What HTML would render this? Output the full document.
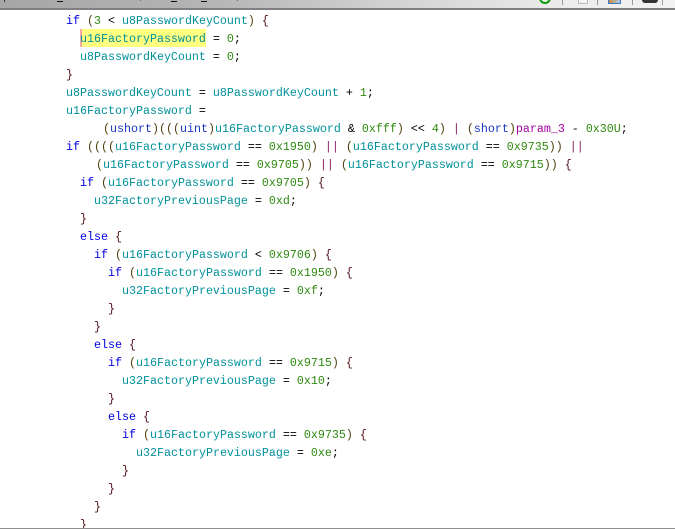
<!DOCTYPE html>
<html>
<head>
<meta charset="utf-8">
<style>
html,body{margin:0;padding:0;background:#fff;width:675px;height:531px;overflow:hidden}
#c{position:relative;width:675px;height:531px;overflow:hidden;background:#fff}
.l{position:absolute;white-space:pre;font-family:"Liberation Mono",monospace;font-size:11.67px;line-height:18px;height:18px;color:#000;margin-top:1px}
.k{color:#0000e6}.v{color:#00919a}.n{color:#2e8b10}.b{color:#501018}.o{color:#000}.t{color:#1a35c0}.p{color:#a000a0}.r{color:#8a2060}.a{color:#504010}
.abs{position:absolute}
</style>
</head>
<body>
<div id="c">
<div class="abs" style="left:0;top:0;width:675px;height:8px;background:linear-gradient(90deg,#a6a6a6 0%,#b4b4b4 30%,#d4d4d4 60%,#ededed 85%,#f2f2f2 100%)"></div>
<div class="abs" style="left:0;top:8px;width:675px;height:2px;background:#808084"></div>
<div class="abs" style="left:57px;top:1px;width:6px;height:1px;background:#111"></div>
<div class="abs" style="left:171px;top:1px;width:6px;height:1px;background:#111"></div>
<div class="abs" style="left:201px;top:1px;width:6px;height:1px;background:#111"></div>
<div class="abs" style="left:4px;top:0;width:1px;height:2px;background:#333"></div>
<div class="abs" style="left:140px;top:0;width:1px;height:1px;background:#666"></div>
<div class="abs" style="left:237px;top:0;width:1px;height:1px;background:#666"></div>
<div class="abs" style="left:539px;top:-8px;width:8px;height:8px;border:2px solid #0a9a0a;border-radius:50%;background:#e8f4e8"></div>
<div class="abs" style="left:562px;top:0;width:1px;height:5px;background:#999"></div>
<div class="abs" style="left:597px;top:0;width:1px;height:5px;background:#999"></div>
<div class="abs" style="left:632px;top:0;width:1px;height:5px;background:#999"></div>
<div class="abs" style="left:662px;top:0;width:1px;height:5px;background:#999"></div>
<div class="abs" style="left:578px;top:-1px;width:8px;height:3px;border:1px solid #bbb;background:#f4f4f4"></div>
<div class="abs" style="left:608px;top:-1px;width:11px;height:3px;border:1px solid #3a78c8;background:linear-gradient(90deg,#c89040,#a8c8e8)"></div>
<div class="abs" style="left:642px;top:0;width:16px;height:3px;background:#333;border-radius:0 0 4px 4px"></div>
<div class="abs" style="left:0;top:528px;width:675px;height:1px;background:#8c8c94"></div>
<div class="abs" style="left:81px;top:29px;width:125px;height:18px;background:#ffff80"></div>
<div class="abs" style="left:80px;top:29px;width:2px;height:18px;background:#f4a8a8"></div>

<div class="l" style="left:66px;top:11px"><span class="k">if</span> <span class="a">(</span><span class="n">3</span> &lt; <span class="v">u8PasswordKeyCount</span><span class="a">)</span> <span class="b">{</span></div>
<div class="l" style="left:80px;top:29px"><span class="v">u16FactoryPassword</span> = <span class="n">0</span>;</div>
<div class="l" style="left:80px;top:47px"><span class="v">u8PasswordKeyCount</span> = <span class="n">0</span>;</div>
<div class="l" style="left:66px;top:65px"><span class="b">}</span></div>
<div class="l" style="left:66px;top:83px"><span class="v">u8PasswordKeyCount</span> = <span class="v">u8PasswordKeyCount</span> + <span class="n">1</span>;</div>
<div class="l" style="left:66px;top:101px"><span class="v">u16FactoryPassword</span> =</div>
<div class="l" style="left:103px;top:119px"><span class="a">(</span><span class="t">ushort</span><span class="a">)((</span><span class="a">(</span><span class="t">uint</span><span class="a">)</span><span class="v">u16FactoryPassword</span> &amp; <span class="n">0xfff</span><span class="a">)</span> &lt;&lt; <span class="n">4</span><span class="a">)</span> <span class="r">|</span> <span class="a">(</span><span class="t">short</span><span class="a">)</span><span class="p">param_3</span> - <span class="n">0x30U</span>;</div>
<div class="l" style="left:66px;top:137px"><span class="k">if</span> <span class="a">(((</span><span class="a">(</span><span class="v">u16FactoryPassword</span> == <span class="n">0x1950</span><span class="a">)</span> <span class="r">||</span> <span class="a">(</span><span class="v">u16FactoryPassword</span> == <span class="n">0x9735</span><span class="a">))</span> <span class="r">||</span></div>
<div class="l" style="left:96px;top:155px"><span class="a">(</span><span class="v">u16FactoryPassword</span> == <span class="n">0x9705</span><span class="a">))</span> <span class="r">||</span> <span class="a">(</span><span class="v">u16FactoryPassword</span> == <span class="n">0x9715</span><span class="a">))</span> <span class="b">{</span></div>
<div class="l" style="left:80px;top:173px"><span class="k">if</span> <span class="a">(</span><span class="v">u16FactoryPassword</span> == <span class="n">0x9705</span><span class="a">)</span> <span class="b">{</span></div>
<div class="l" style="left:94px;top:191px"><span class="v">u32FactoryPreviousPage</span> = <span class="n">0xd</span>;</div>
<div class="l" style="left:80px;top:209px"><span class="b">}</span></div>
<div class="l" style="left:80px;top:227px"><span class="k">else</span> <span class="b">{</span></div>
<div class="l" style="left:94px;top:245px"><span class="k">if</span> <span class="a">(</span><span class="v">u16FactoryPassword</span> &lt; <span class="n">0x9706</span><span class="a">)</span> <span class="b">{</span></div>
<div class="l" style="left:108px;top:263px"><span class="k">if</span> <span class="a">(</span><span class="v">u16FactoryPassword</span> == <span class="n">0x1950</span><span class="a">)</span> <span class="b">{</span></div>
<div class="l" style="left:122px;top:281px"><span class="v">u32FactoryPreviousPage</span> = <span class="n">0xf</span>;</div>
<div class="l" style="left:108px;top:299px"><span class="b">}</span></div>
<div class="l" style="left:94px;top:317px"><span class="b">}</span></div>
<div class="l" style="left:94px;top:335px"><span class="k">else</span> <span class="b">{</span></div>
<div class="l" style="left:108px;top:353px"><span class="k">if</span> <span class="a">(</span><span class="v">u16FactoryPassword</span> == <span class="n">0x9715</span><span class="a">)</span> <span class="b">{</span></div>
<div class="l" style="left:122px;top:371px"><span class="v">u32FactoryPreviousPage</span> = <span class="n">0x10</span>;</div>
<div class="l" style="left:108px;top:389px"><span class="b">}</span></div>
<div class="l" style="left:108px;top:407px"><span class="k">else</span> <span class="b">{</span></div>
<div class="l" style="left:122px;top:425px"><span class="k">if</span> <span class="a">(</span><span class="v">u16FactoryPassword</span> == <span class="n">0x9735</span><span class="a">)</span> <span class="b">{</span></div>
<div class="l" style="left:136px;top:443px"><span class="v">u32FactoryPreviousPage</span> = <span class="n">0xe</span>;</div>
<div class="l" style="left:122px;top:461px"><span class="b">}</span></div>
<div class="l" style="left:108px;top:479px"><span class="b">}</span></div>
<div class="l" style="left:94px;top:497px"><span class="b">}</span></div>
<div class="abs" style="left:0;top:515px;width:675px;height:13px;overflow:hidden"><div class="l" style="left:80px;top:0"><span class="b">}</span></div></div>
</div>
</body>
</html>
